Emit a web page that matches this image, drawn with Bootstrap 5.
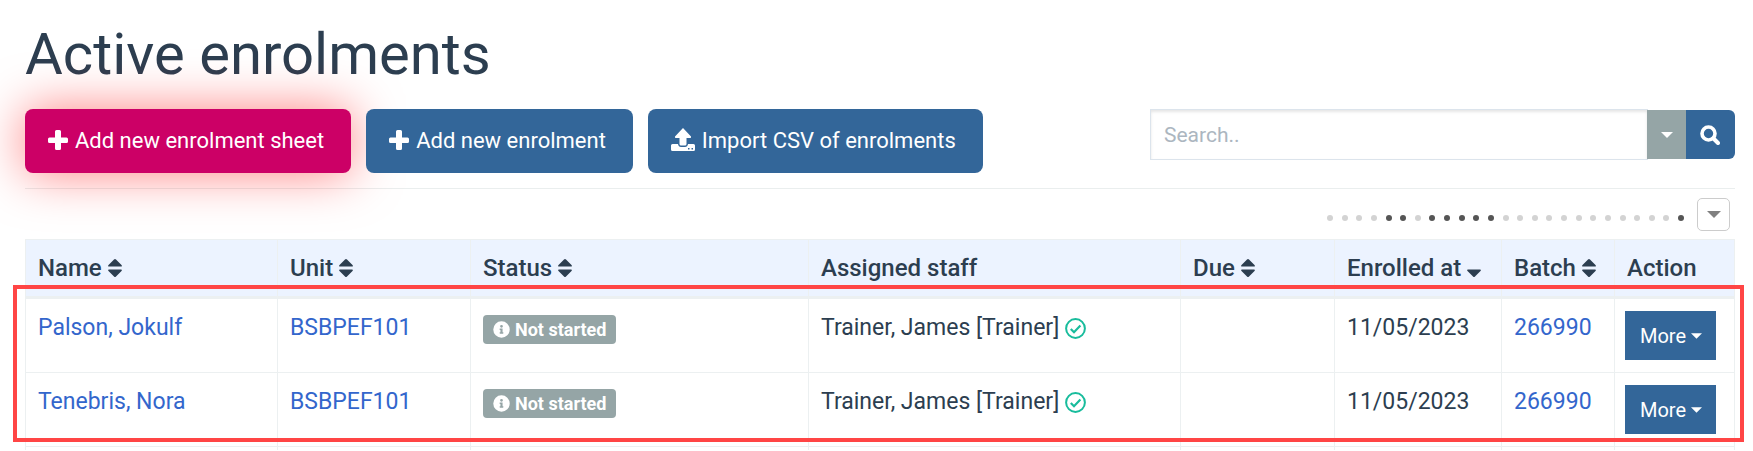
<!DOCTYPE html>
<html lang="en">
<head>
<meta charset="utf-8">
<meta name="viewport" content="width=device-width, initial-scale=1">
<title>Active enrolments</title>
<link href="https://cdn.jsdelivr.net/npm/bootstrap@5.3.0/dist/css/bootstrap.min.css" rel="stylesheet">
<style>
  body { font-family: Roboto, "Liberation Sans", sans-serif; font-size: 23px; line-height: 32px; color: #2c3e50; background: #fff; }
  a { color: #3366cc; text-decoration: none; }
  svg { fill: currentColor; flex: none; }
  .page { padding: 20px 18px 0 25px; }
  .page-title { font-size: 58px; line-height: 68px; font-weight: 400; margin-bottom: 21px; }
  .toolbar { gap: 15px; padding-bottom: 15px; border-bottom: 1px solid #eaeeee; }
  .btn-tool { height: 64px; padding: 0 27px 2px 23px; font-size: 22px; color: #fff; background: #336699; border: 0; border-radius: 8px; display: flex; align-items: center; gap: 7px; }
  .btn-tool:hover { color: #fff; background: #2b5783; }
  .btn-sheet, .btn-sheet:hover { background: #cc0066; box-shadow: 0 0 50px rgba(255, 0, 0, .5); }
  .finder { width: 585px; height: 51px; }
  .finder .form-control { height: 51px; font-size: 21px; padding: 0 13px; color: #2c3e50; border: 1px solid #dce4ec; border-radius: 0; box-shadow: inset 0 2px 3px rgba(0, 0, 0, .1); }
  .finder .form-control::placeholder { color: #acb6c0; }
  .finder .btn { height: 49px; margin: 1px 0; padding: 0; border: 0; color: #fff; border-radius: 0; }
  .finder .btn-scope { width: 39px; background: #95a5a6; margin-left: -3px; z-index: 6; }
  .finder .btn-go { width: 50px; background: #336699; border-radius: 0 6px 6px 0; }
  .column-bar { gap: 13px; padding: 9px 5px 8px 0; }
  .dots { width: 357px; padding-top: 7px; }
  .dots span { width: 6px; height: 6px; border-radius: 50%; background: #d3d3d3; }
  .dots .on { background: #555; }
  .btn-columns { width: 33px; height: 33px; padding: 0; background: #fff; border: 1px solid #ccc; border-radius: 5px; color: #808080; display: flex; align-items: center; justify-content: center; }
  .grid { table-layout: fixed; color: #2c3e50; border-color: #ecf0f1; border-collapse: collapse; margin: 0; }
  .grid > :not(caption) > * > * { padding: 13px 12px 11px; border: 1px solid #ecf0f1; background: transparent; vertical-align: top; white-space: nowrap; }
  .grid > thead > tr > th { padding: 12px; font-size: 24px; font-weight: 500; background: #ecf3ff; border-bottom: 3px solid #ecf0f1; }
  .grid > thead > tr > th svg { margin-top: -4px; }
  .grid > tbody > tr > .act { padding: 12px 12px 12px 10px; }
  .grid > tbody > .next-row > td { height: 3px; padding: 0; border-bottom: 0; }
  .c-name { width: 252px; } .c-unit { width: 193px; } .c-status { width: 338px; } .c-staff { width: 372px; }
  .c-due { width: 154px; } .c-date { width: 167px; } .c-batch { width: 113px; } .c-act { width: 120px; }
  .status { display: inline-flex; align-items: center; gap: 5px; height: 29px; padding: 0 10px; margin-top: 3px; font-size: 18px; line-height: 28px; font-weight: 700; background: #95a5a6; border-radius: 4px; color: #fff; vertical-align: top; }
  .btn-more { display: flex; align-items: center; gap: 5px; width: 91px; height: 49px; padding: 0 0 0 15px; font-size: 20px; color: #fff; background: #336699; border: 0; border-radius: 0; }
  .marker { position: absolute; top: 46px; bottom: 8px; left: -12px; right: -9px; border: 4px solid #ff4545; pointer-events: none; }
</style>
</head>
<body>
<svg class="d-none" aria-hidden="true">
  <symbol id="plus" viewBox="0 0 20 20"><path d="M8.500 0h3a1.500 1.500 0 0 1 1.500 1.500V7.500h5.500A1.500 1.500 0 0 1 20 9v2.500a1.500 1.500 0 0 1-1.500 1.500H13v5.500a1.500 1.500 0 0 1-1.500 1.500h-3A1.500 1.500 0 0 1 7 18.500V13H1.500A1.500 1.500 0 0 1 0 11.500V9a1.500 1.500 0 0 1 1.500-1.500H7v-6A1.500 1.500 0 0 1 8.500 0z"/></symbol>
  <symbol id="upload" viewBox="0 0 24 24"><path fill-rule="evenodd" d="M12 0l8 8.500q.5 1.500-1 1.500h-3.500v6q0 1.500-1.500 1.500h-4Q8.500 17.500 8.500 16v-6H5q-1.500 0-1-1.500zM1.500 16H7q.5 3 3 3h4q2.500 0 3-3h5.500q1.500 0 1.500 1.500v4q0 1.500-1.500 1.500h-21Q0 23 0 21.500v-4Q0 16 1.500 16zM17 20v1.500h1.500V20zm3.500 0v1.500H22V20z"/></symbol>
  <symbol id="sort" viewBox="0 0 14 20"><path d="M1 8.500Q-.5 8.500.5 7L6 1.500q1-1 2 0L13.500 7q1 1.500-.5 1.500zM1 11.500Q-.5 11.500.5 13L6 18.500q1 1 2 0L13.500 13q1-1.500-.5-1.500z"/></symbol>
  <symbol id="sort-down" viewBox="0 0 14 20"><path d="M1 11.500Q-.5 11.500.5 13L6 18.500q1 1 2 0L13.500 13q1-1.500-.5-1.500z"/></symbol>
  <symbol id="caret" viewBox="0 0 12 6"><path d="M0 0h12L6 6z"/></symbol>
  <symbol id="search" viewBox="0 0 20 20"><circle cx="8.500" cy="8.500" r="6.500" fill="none" stroke="currentColor" stroke-width="3.600"/><path d="M13.500 13.500l4.500 4.500" stroke="currentColor" stroke-width="4" stroke-linecap="round"/></symbol>
  <symbol id="info" viewBox="0 0 512 512"><path fill-rule="evenodd" d="M256 8a248 248 0 1 0 0 496 248 248 0 0 0 0-496zm0 110a42 42 0 1 1 0 84 42 42 0 0 1 0-84zm56 254c0 6.600-5.400 12-12 12h-88c-6.600 0-12-5.400-12-12v-24c0-6.600 5.400-12 12-12h12v-64h-12c-6.600 0-12-5.400-12-12v-24c0-6.600 5.400-12 12-12h64c6.600 0 12 5.400 12 12v100h12c6.600 0 12 5.400 12 12z"/></symbol>
  <symbol id="check" viewBox="0 0 21 21"><circle cx="10.500" cy="10.500" r="9.400" fill="none" stroke="currentColor" stroke-width="2"/><path d="M5.800 11l3.200 3.200 6.400-6.600" fill="none" stroke="currentColor" stroke-width="2.200"/></symbol>
</svg>

<main class="page">
  <h1 class="page-title">Active enrolments</h1>

  <div class="toolbar d-flex">
    <button type="button" class="btn btn-tool btn-sheet"><svg width="20" height="20"><use href="#plus"/></svg>Add new enrolment sheet</button>
    <button type="button" class="btn btn-tool"><svg width="20" height="20"><use href="#plus"/></svg>Add new enrolment</button>
    <button type="button" class="btn btn-tool"><svg width="24" height="24"><use href="#upload"/></svg>Import CSV of enrolments</button>
    <form class="finder input-group flex-nowrap ms-auto" role="search">
      <input type="text" class="form-control" placeholder="Search.." aria-label="Search">
      <button type="button" class="btn btn-scope" aria-label="Search options"><svg width="12" height="6"><use href="#caret"/></svg></button>
      <button type="submit" class="btn btn-go d-flex align-items-center justify-content-center" aria-label="Go"><svg width="20" height="20"><use href="#search"/></svg></button>
    </form>
  </div>

  <div class="column-bar d-flex justify-content-end align-items-center">
    <div class="dots d-flex justify-content-between">
      <span></span><span></span><span></span><span></span><span class="on"></span><span class="on"></span><span></span><span class="on"></span><span class="on"></span><span class="on"></span><span class="on"></span><span class="on"></span><span></span><span></span><span></span><span></span><span></span><span></span><span></span><span></span><span></span><span></span><span></span><span></span><span class="on"></span>
    </div>
    <button type="button" class="btn btn-columns" aria-label="Choose columns"><svg width="14" height="7"><use href="#caret"/></svg></button>
  </div>

  <div class="position-relative">
    <table class="table grid">
      <colgroup><col class="c-name"><col class="c-unit"><col class="c-status"><col class="c-staff"><col class="c-due"><col class="c-date"><col class="c-batch"><col class="c-act"></colgroup>
      <thead>
        <tr>
          <th scope="col">Name <svg width="14" height="20"><use href="#sort"/></svg></th>
          <th scope="col">Unit <svg width="14" height="20"><use href="#sort"/></svg></th>
          <th scope="col">Status <svg width="14" height="20"><use href="#sort"/></svg></th>
          <th scope="col">Assigned staff</th>
          <th scope="col">Due <svg width="14" height="20"><use href="#sort"/></svg></th>
          <th scope="col">Enrolled at <svg width="14" height="20"><use href="#sort-down"/></svg></th>
          <th scope="col">Batch <svg width="14" height="20"><use href="#sort"/></svg></th>
          <th scope="col">Action</th>
        </tr>
      </thead>
      <tbody>
        <tr>
          <td><a href="#">Palson, Jokulf</a></td>
          <td><a href="#">BSBPEF101</a></td>
          <td><span class="status"><svg width="17" height="17"><use href="#info"/></svg>Not started</span></td>
          <td>Trainer, James [Trainer] <svg width="21" height="21" color="#18bc9c"><use href="#check"/></svg></td>
          <td></td>
          <td>11/05/2023</td>
          <td><a href="#">266990</a></td>
          <td class="act"><button type="button" class="btn btn-more">More<svg width="11" height="6"><use href="#caret"/></svg></button></td>
        </tr>
        <tr>
          <td><a href="#">Tenebris, Nora</a></td>
          <td><a href="#">BSBPEF101</a></td>
          <td><span class="status"><svg width="17" height="17"><use href="#info"/></svg>Not started</span></td>
          <td>Trainer, James [Trainer] <svg width="21" height="21" color="#18bc9c"><use href="#check"/></svg></td>
          <td></td>
          <td>11/05/2023</td>
          <td><a href="#">266990</a></td>
          <td class="act"><button type="button" class="btn btn-more">More<svg width="11" height="6"><use href="#caret"/></svg></button></td>
        </tr>
        <tr class="next-row"><td></td><td></td><td></td><td></td><td></td><td></td><td></td><td></td></tr>
      </tbody>
    </table>
    <div class="marker"></div>
  </div>
</main>
<script src="https://cdn.jsdelivr.net/npm/bootstrap@5.3.0/dist/js/bootstrap.bundle.min.js"></script>
</body>
</html>
